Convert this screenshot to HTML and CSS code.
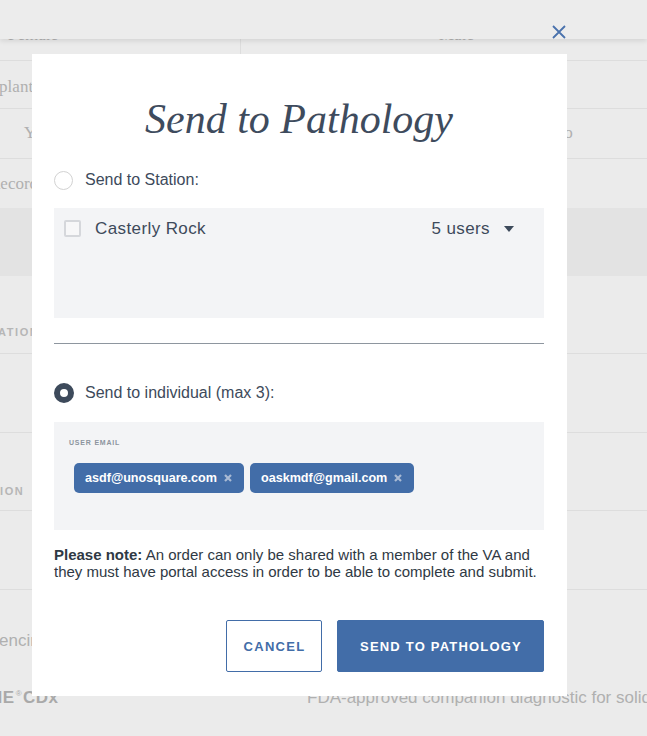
FILE: index.html
```html
<!DOCTYPE html>
<html lang="en">
<head>
<meta charset="utf-8">
<title>Send to Pathology</title>
<link rel="stylesheet" href="styles.css">
</head>
<body>
<div class="page">
  <div class="bg">
    <div class="row row-1">
      <div class="cell cell-left cell-divided"><span class="bg-serif t-female">Female</span></div>
      <div class="cell cell-right"><span class="bg-serif t-male">Male</span></div>
    </div>
    <div class="row row-2">
      <div class="cell cell-left"><span class="bg-serif t-plan">Transplant</span></div>
    </div>
    <div class="row row-3">
      <div class="cell cell-left"><span class="bg-serif t-yes">Yes</span></div>
      <div class="cell cell-right"><span class="bg-serif t-no">No</span></div>
    </div>
    <div class="row row-4">
      <div class="cell cell-left"><span class="bg-serif t-record">Record</span></div>
    </div>
    <div class="band"></div>
    <div class="row row-5">
      <div class="cell cell-left"><span class="bg-caps t-ation">ATION</span></div>
    </div>
    <div class="row row-6"></div>
    <div class="row row-7">
      <div class="cell cell-left"><span class="bg-caps t-ion">ION</span></div>
    </div>
    <div class="row row-8"></div>
    <div class="row row-9">
      <div class="cell cell-left"><span class="bg-sans t-encin">encing</span></div>
    </div>
    <div class="row row-10">
      <div class="cell cell-brand"><span class="bg-brand">NE<sup class="reg">®</sup>CDx</span></div>
      <div class="cell cell-desc"><span class="bg-sans">FDA-approved companion diagnostic for solid tumors</span></div>
    </div>
  </div>

  <header class="topbar"></header>

  <button class="close" type="button" aria-label="Close">
    <svg width="14" height="14" viewBox="0 0 14 14" aria-hidden="true">
      <path d="M1 1 L13 13 M13 1 L1 13" stroke="#4a72ad" stroke-width="1.8" fill="none"/>
    </svg>
  </button>

  <div class="modal" role="dialog">
    <h1 class="modal-title">Send to Pathology</h1>

    <label class="radio-row radio-row--station">
      <span class="radio"></span>
      <span class="radio-label">Send to Station:</span>
    </label>

    <div class="station-box">
      <div class="station-item">
        <span class="checkbox"></span>
        <span class="station-name">Casterly Rock</span>
        <span class="station-users">5 users</span>
        <svg class="caret" width="10" height="6" viewBox="0 0 10 6" aria-hidden="true">
          <path d="M0 0 L10 0 L5 6 Z" fill="#3d4a5b"/>
        </svg>
      </div>
    </div>

    <hr class="divider">

    <label class="radio-row radio-row--individual">
      <span class="radio radio--checked"></span>
      <span class="radio-label">Send to individual (max 3):</span>
    </label>

    <div class="email-box">
      <div class="email-label">USER EMAIL</div>
      <div class="chips">
        <span class="chip">asdf@unosquare.com
          <svg class="chip-x" width="8" height="8" viewBox="0 0 8 8" aria-hidden="true"><path d="M1 1 L7 7 M7 1 L1 7" stroke="#a9bad4" stroke-width="2.2" fill="none"/></svg>
        </span>
        <span class="chip">oaskmdf@gmail.com
          <svg class="chip-x" width="8" height="8" viewBox="0 0 8 8" aria-hidden="true"><path d="M1 1 L7 7 M7 1 L1 7" stroke="#a9bad4" stroke-width="2.2" fill="none"/></svg>
        </span>
      </div>
    </div>

    <p class="note"><strong>Please note:</strong> An order can only be shared with a member of the VA and they must have portal access in order to be able to complete and submit.</p>

    <div class="actions">
      <button class="btn btn-outline" type="button">CANCEL</button>
      <button class="btn btn-primary" type="button">SEND TO PATHOLOGY</button>
    </div>
  </div>
</div>
</body>
</html>
```
FILE: styles.css
```css
html, body {
  margin: 0;
  padding: 0;
}

body {
  width: 647px;
  height: 736px;
  overflow: hidden;
  background: #ebebeb;
  font-family: "Liberation Sans", Arial, sans-serif;
}

.page {
  position: relative;
  width: 647px;
  height: 736px;
  overflow: hidden;
}

/* ---------- background page ---------- */
.bg {
  display: flex;
  flex-direction: column;
  color: #b0b0b0;
}

.row {
  display: flex;
  box-sizing: border-box;
  border-bottom: 1px solid #dddddd;
  flex: none;
}

.cell {
  box-sizing: border-box;
  white-space: nowrap;
}

.cell-left {
  width: 241px;
  flex: none;
}

.cell-divided {
  border-right: 1px solid #dddddd;
}

.cell-right {
  flex: 1;
}

.bg-serif {
  font-family: "Liberation Serif", "Times New Roman", serif;
  font-size: 17px;
  line-height: 20px;
  display: block;
}

.bg-sans {
  font-family: "Liberation Sans", Arial, sans-serif;
  font-size: 17px;
  line-height: 20px;
  display: block;
}

.bg-caps {
  font-family: "Liberation Sans", Arial, sans-serif;
  font-size: 11px;
  line-height: 13px;
  font-weight: bold;
  letter-spacing: 1.6px;
  display: block;
  color: #b6b6b6;
}

.bg-brand {
  font-family: "Liberation Sans", Arial, sans-serif;
  font-size: 17px;
  line-height: 20px;
  font-weight: bold;
  display: block;
  color: #a9a9a9;
  margin-left: -10px;
  letter-spacing: 0.5px;
}

.reg {
  font-size: 8px;
  font-weight: normal;
  vertical-align: 7px;
  line-height: 0;
  margin: 0 1px;
}

.row-1 { height: 61px; }
.row-1 .cell { padding-top: 25px; }
.t-female { margin-left: 8px; }
.t-male { margin-left: 198px; }

.row-2 { height: 48px; padding-top: 16px; }
.t-plan { margin-left: -39px; }

.row-3 { height: 50px; padding-top: 14px; }
.t-yes { margin-left: 24px; }
.t-no { margin-left: 311px; }

.row-4 { height: 49px; padding-top: 15px; border-bottom: none; }
.t-record { margin-left: -11px; }

.band {
  height: 68px;
  background: #e3e3e3;
  flex: none;
}

.row-5 { height: 78px; padding-top: 50px; }
.t-ation { margin-left: -2px; }

.row-6 { height: 79px; }

.row-7 { height: 78px; padding-top: 52px; }
.t-ion { margin-left: 0; }

.row-8 { height: 79px; }

.row-9 { height: 57px; padding-top: 41px; border-bottom: none; }
.t-encin { margin-left: -1px; }

.row-10 { height: 89px; padding-top: 41px; border-bottom: none; }
.cell-brand { width: 307px; flex: none; }
.cell-desc { flex: 1; min-width: 0; }

/* ---------- top bar ---------- */
.topbar {
  position: absolute;
  top: 0;
  left: 0;
  width: 100%;
  height: 39px;
  background: #ececec;
  box-shadow: 0 2px 5px rgba(0, 0, 0, 0.10);
}

.close {
  position: absolute;
  top: 25px;
  left: 552px;
  width: 14px;
  height: 14px;
  padding: 0;
  margin: 0;
  border: none;
  background: transparent;
  display: block;
}

.close svg {
  display: block;
}

/* ---------- modal ---------- */
.modal {
  position: absolute;
  top: 54px;
  left: 32px;
  width: 535px;
  box-sizing: border-box;
  padding: 40px 23px 24px 22px;
  background: #ffffff;
  display: flex;
  flex-direction: column;
  color: #3d4a5b;
}

.modal-title {
  margin: 0;
  font-family: "Liberation Serif", "Times New Roman", serif;
  font-style: italic;
  font-weight: normal;
  font-size: 42px;
  line-height: 50px;
  text-align: center;
  color: #3e4b5d;
}

.radio-row {
  display: flex;
  align-items: center;
  height: 20px;
  margin-top: 26px;
}

.radio-row--individual {
  margin-top: 39px;
}

.radio {
  width: 19px;
  height: 19px;
  box-sizing: border-box;
  border: 1px solid #d2d2d2;
  border-radius: 50%;
  background: #ffffff;
  flex: none;
}

.radio--checked {
  width: 20px;
  height: 20px;
  border: 6.5px solid #3d4a5b;
}

.radio-label {
  margin-left: 12px;
  font-size: 16px;
  line-height: 20px;
  color: #3d4a5b;
}

.radio--checked + .radio-label {
  margin-left: 11px;
}

.station-box {
  margin-top: 18px;
  height: 110px;
  background: #f3f4f6;
  box-sizing: border-box;
  padding: 12px 30px 0 10px;
}

.station-item {
  display: flex;
  align-items: center;
  height: 17px;
}

.checkbox {
  width: 17px;
  height: 17px;
  box-sizing: border-box;
  border: 2px solid #d5d7db;
  border-radius: 2px;
  background: #f7f7f8;
  flex: none;
}

.station-name {
  margin-left: 14px;
  font-size: 17px;
  line-height: 17px;
  letter-spacing: 0.4px;
  color: #3d4a5b;
  flex: 1;
}

.station-users {
  font-size: 17px;
  line-height: 17px;
  letter-spacing: 0.4px;
  color: #3d4a5b;
}

.caret {
  margin-left: 14px;
  display: block;
  flex: none;
}

.divider {
  margin: 25px 0 0 0;
  border: none;
  border-top: 1px solid #8e969f;
  height: 0;
}

.email-box {
  margin-top: 19px;
  height: 108px;
  box-sizing: border-box;
  background: #f3f4f6;
  padding: 16px 15px 0 15px;
}

.email-label {
  font-size: 7px;
  line-height: 9px;
  font-weight: bold;
  letter-spacing: 0.8px;
  color: #8c949e;
}

.chips {
  display: flex;
  gap: 6px;
  margin-top: 16px;
  margin-left: 5px;
}

.chip {
  display: inline-flex;
  align-items: center;
  height: 30px;
  box-sizing: border-box;
  padding: 0 12px 0 11px;
  border-radius: 5px;
  background: #426da8;
  color: #ffffff;
  font-size: 12.6px;
  font-weight: bold;
  white-space: nowrap;
}

.chip-x {
  margin-left: 7px;
  display: block;
}

.note {
  margin: 16px 0 0 0;
  font-size: 15px;
  line-height: 17px;
  color: #2f3944;
}

.note strong {
  font-weight: bold;
}

.actions {
  display: flex;
  justify-content: flex-end;
  gap: 15px;
  margin-top: 40px;
}

.btn {
  height: 52px;
  box-sizing: border-box;
  font-family: "Liberation Sans", Arial, sans-serif;
  font-size: 13px;
  font-weight: bold;
  letter-spacing: 1.3px;
  border-radius: 2px;
  margin: 0;
  cursor: pointer;
}

.btn-outline {
  width: 96px;
  background: #ffffff;
  border: 1px solid #426da8;
  color: #426da8;
  padding: 0 0 0 1px;
}

.btn-primary {
  width: 207px;
  background: #426da8;
  border: 1px solid #426da8;
  color: #ffffff;
  letter-spacing: 1.2px;
  padding: 0 0 0 1px;
}
```
